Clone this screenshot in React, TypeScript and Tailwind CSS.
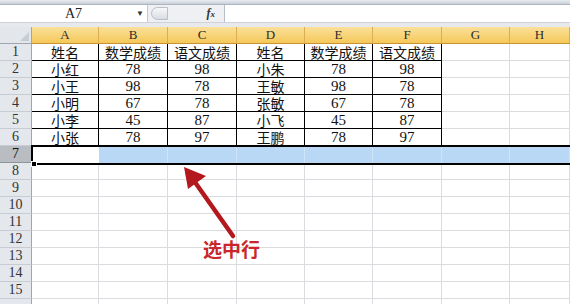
import React from "react";

const COLS = ["A", "B", "C", "D", "E", "F", "G", "H"];

const DATA: string[][] = [
  ["姓名", "数学成绩", "语文成绩", "姓名", "数学成绩", "语文成绩"],
  ["小红", "78", "98", "小朱", "78", "98"],
  ["小王", "98", "78", "王敏", "98", "78"],
  ["小明", "67", "78", "张敏", "67", "78"],
  ["小李", "45", "87", "小飞", "45", "87"],
  ["小张", "78", "97", "王鹏", "78", "97"],
];

const CJK = "font-['Noto_Sans_CJK_SC',sans-serif]";
const NUM = "font-['Liberation_Serif','Noto_Sans_CJK_SC',serif]";

function FormulaBar() {
  return (
    <div className="flex flex-col">
      <div className="h-[5px] bg-gradient-to-b from-[#e9edf3] to-[#c9cfd8] border-b border-[#aeb5bf]" />
      <div className="flex h-[17px] bg-[#eef0f3]">
        <div className="relative flex w-[148px] items-center justify-center border-r border-[#c3c8cf] bg-white">
          <span className={`${NUM} text-[14px] leading-[16px] text-[#222]`}>A7</span>
          <span className="absolute right-[3px] top-[2px] text-[8px] leading-[12px] text-[#333]">▼</span>
        </div>
        <div className="flex w-[76px] items-center px-[3px]">
          <div className="h-[13px] w-[17px] rounded-l-full border border-[#b9bfc8] bg-gradient-to-b from-[#f6f7f9] to-[#d9dde3]" />
          <span className="ml-auto mr-[6px] font-['Liberation_Serif',serif] text-[12px] leading-[14px] font-bold italic text-[#333]">
            f<span className="text-[9px]">x</span>
          </span>
        </div>
        <div className="flex-1 border-l border-[#b9bfc8] bg-white" />
      </div>
      <div className="h-[5px] border-t border-[#cfd3d9] bg-[#e7e9ec]" />
    </div>
  );
}

function Sheet() {
  const rows = Array.from({ length: 16 }, (_, i) => i + 1);
  return (
    <div className="grid grid-cols-[32px_67px_69px_69px_68px_68px_69px_68px_1fr] auto-rows-[17px]">
      <div className="relative border-r border-b border-[#9ea5ae] bg-[#e3e6eb]">
        <div className="absolute bottom-[2px] right-[2px] h-0 w-0 border-b-[9px] border-l-[9px] border-b-[#c7ccd3] border-l-transparent" />
      </div>
      {COLS.map((c) => (
        <div
          key={c}
          className={`${NUM} flex items-center justify-center border-r border-b border-r-[#d9ae55] border-b-[#c79433] bg-gradient-to-b from-[#fbe09a] to-[#f5c957] text-[13px] leading-[16px] text-[#2b2b2b]`}
        >
          {c}
        </div>
      ))}
      {rows.map((r) => {
        const sel = r === 7;
        return (
          <React.Fragment key={r}>
            <div
              className={`${NUM} flex items-center justify-center border-r border-b text-[14px] leading-[16px] ${
                sel
                  ? "border-[#8e949b] bg-[#b9bcc1] text-[#111]"
                  : "border-r-[#9ea5ae] border-b-[#c7ccd3] bg-[#e4e7ec] text-[#333]"
              }`}
            >
              {r < 16 ? r : ""}
            </div>
            {COLS.map((c, ci) => {
              const val = r <= 6 && ci < 6 ? DATA[r - 1][ci] : "";
              const inTable = r <= 6 && ci < 6;
              const isNum = /^\d+$/.test(val);
              let cls = "border-r border-b border-[#dadcdf] bg-white";
              if (inTable) cls = "border-r border-b border-black bg-white";
              if (sel) cls = ci === 0 ? "bg-white" : "border-r border-[#cfe3f7] bg-[#b9d8f6]";
              return (
                <div
                  key={c}
                  className={`flex items-center justify-center whitespace-nowrap leading-[16px] text-[#111] ${
                    isNum ? `${NUM} text-[15px]` : `${CJK} text-[14px]`
                  } ${cls}`}
                >
                  {val}
                </div>
              );
            })}
          </React.Fragment>
        );
      })}
    </div>
  );
}

export default function App() {
  return (
    <div className="relative h-[304px] w-[570px] overflow-hidden bg-white">
      <FormulaBar />
      <Sheet />

      {/* selected row outline + fill handle */}
      <div className="pointer-events-none absolute left-[31px] right-0 top-[145px] h-[20px] border-y-2 border-l-2 border-black" />
      <div className="absolute left-[31px] top-[161px] h-[6px] w-[6px] border border-white bg-black" />

      {/* annotation arrow */}
      <svg className="absolute left-0 top-0" width="570" height="304" viewBox="0 0 570 304">
        <line x1="233" y1="236" x2="192" y2="178" stroke="#b3191c" strokeWidth="4.5" strokeLinecap="round" />
        <polygon points="184,167 206,176 188,189" fill="#b3191c" />
      </svg>
      <div className={`${CJK} absolute left-[203px] top-[238px] text-[19px] font-bold leading-[22px] text-[#c9272b]`}>
        选中行
      </div>
    </div>
  );
}
